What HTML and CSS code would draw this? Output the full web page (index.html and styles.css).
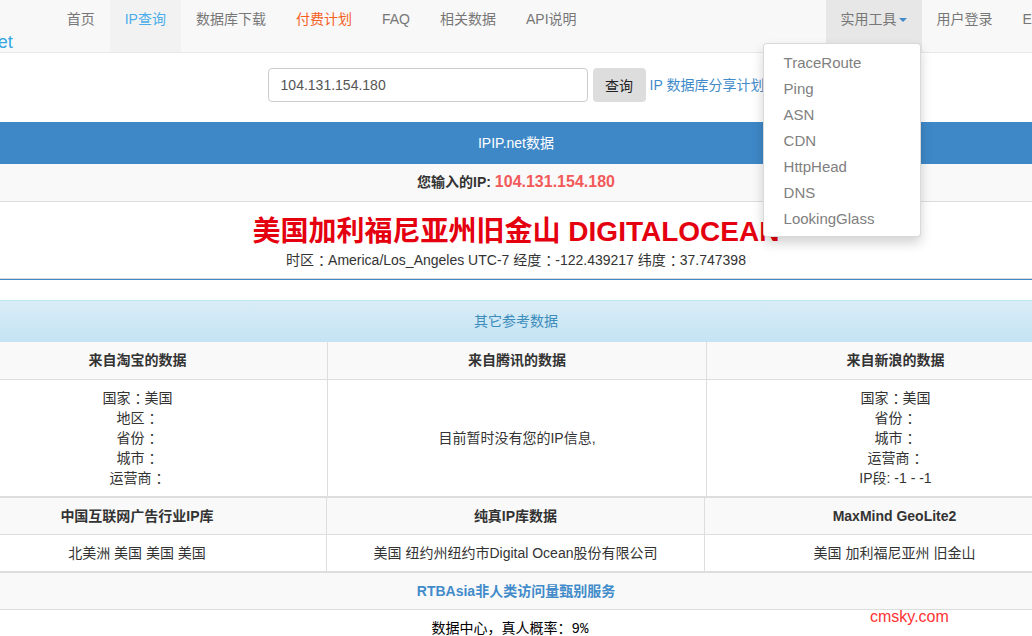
FILE: index.html
```html
<!DOCTYPE html>
<html lang="zh-CN">
<head>
    <meta charset="UTF-8">
    <meta name="viewport" content="width=device-width, initial-scale=1.0">
    <title>IP查询 - IPIP.net</title>
    <link rel="stylesheet" href="styles.css">
</head>
<body>
    <div class="page">
        <nav class="navbar">
            <a class="brand" href="#">IPIP.net</a>
            <ul class="nav">
                <li><a href="#">首页</a></li>
                <li class="active"><a href="#">IP查询</a></li>
                <li><a href="#">数据库下载</a></li>
                <li class="hot"><a href="#">付费计划</a></li>
                <li><a href="#">FAQ</a></li>
                <li><a href="#">相关数据</a></li>
                <li><a href="#">API说明</a></li>
            </ul>
            <ul class="nav nav-right">
                <li class="open">
                    <a href="#">实用工具<span class="caret"></span></a>
                    <!-- tools menu, left open -->
                    <ul class="dropdown">
                        <li><a href="#">TraceRoute</a></li>
                        <li><a href="#">Ping</a></li>
                        <li><a href="#">ASN</a></li>
                        <li><a href="#">CDN</a></li>
                        <li><a href="#">HttpHead</a></li>
                        <li><a href="#">DNS</a></li>
                        <li><a href="#">LookingGlass</a></li>
                    </ul>
                </li>
                <li><a href="#">用户登录</a></li>
                <li><a href="#">English</a></li>
            </ul>
        </nav>

        <form class="search">
            <input class="search-input" type="text" value="104.131.154.180">
            <button class="search-btn" type="button">查询</button>
            <a class="search-link" href="#">IP 数据库分享计划</a>
        </form>

        <div class="panel">
            <div class="panel-heading">IPIP.net数据</div>
            <div class="ip-row">您输入的IP: <span class="ip">104.131.154.180</span></div>
            <div class="result">
                <div class="result-title">美国加利福尼亚州旧金山 DIGITALOCEAN</div>
                <div class="result-meta">时区<span class="c">：</span>America/Los_Angeles UTC-7 经度<span class="c">：</span>-122.439217 纬度<span class="c">：</span>37.747398</div>
            </div>
        </div>

        <div class="info">
            <div class="info-heading">其它参考数据</div>
            <div class="grid grid-a">
                <div class="th">来自淘宝的数据</div>
                <div class="th">来自腾讯的数据</div>
                <div class="th">来自新浪的数据</div>
                <div class="td end">国家<span class="c">：</span>美国<br>地区<span class="c">：</span><br>省份<span class="c">：</span><br>城市<span class="c">：</span><br>运营商<span class="c">：</span></div>
                <div class="td end middle">目前暂时没有您的IP信息,</div>
                <div class="td end">国家<span class="c">：</span>美国<br>省份<span class="c">：</span><br>城市<span class="c">：</span><br>运营商<span class="c">：</span><br>IP段: -1 - -1</div>
            </div>
            <div class="grid grid-b">
                <div class="th">中国互联网广告行业IP库</div>
                <div class="th">纯真IP库数据</div>
                <div class="th">MaxMind GeoLite2</div>
                <div class="td end">北美洲 美国 美国 美国</div>
                <div class="td end">美国 纽约州纽约市Digital Ocean股份有限公司</div>
                <div class="td end">美国 加利福尼亚州 旧金山</div>
            </div>
            <div class="rtb">RTBAsia非人类访问量甄别服务</div>
            <div class="rtb-result">数据中心，真人概率：<span class="mono">9%</span></div>
        </div>
    </div>
    <div class="watermark">cmsky.com</div>
</body>
</html>
```

FILE: styles.css
```css
html, body {
    margin: 0;
    padding: 0;
}
body {
    font-family: "Liberation Sans", "Noto Sans CJK SC", sans-serif;
    font-size: 14px;
    line-height: 20px;
    color: #333;
    background: #fff;
    overflow: hidden;
}
a {
    text-decoration: none;
}
ul {
    list-style: none;
    margin: 0;
    padding: 0;
}
.page {
    width: 1136px;
    margin-left: -52px;
}
/* full-width colon drawn in the middle of its box */
.c {
    padding-left: 4px;
    letter-spacing: -4px;
}

/* navbar */
.navbar {
    display: flex;
    height: 52px;
    background: #f8f8f8;
    border-bottom: 1px solid #e7e7e7;
    white-space: nowrap;
}
.brand {
    margin-left: 3px;
    padding-top: 32px;
    font-size: 18px;
    color: #35a6e2;
}
.nav {
    display: flex;
    margin-left: 39px;
}
.nav > li {
    position: relative;
}
.nav > li > a {
    display: block;
    height: 52px;
    box-sizing: border-box;
    padding: 9px 15px 0;
    color: #777;
}
.nav > li.active > a {
    background: #f2f2f2;
    color: #4badea;
}
.nav > li.hot > a {
    color: #f5601e;
}
.nav-right {
    margin-left: 234px;
}
.nav > li.open > a {
    background: #e7e7e7;
}
.caret {
    display: inline-block;
    width: 0;
    height: 0;
    margin-left: 2px;
    vertical-align: middle;
    border-top: 4px solid #428bca;
    border-left: 4px solid transparent;
    border-right: 4px solid transparent;
}
.dropdown {
    position: absolute;
    top: 43px;
    right: 1px;
    z-index: 10;
    width: 158px;
    box-sizing: border-box;
    padding: 6px 0 4px;
    background: #fff;
    border: 1px solid rgba(0, 0, 0, .15);
    border-radius: 4px;
    box-shadow: 0 6px 12px rgba(0, 0, 0, .175);
}
.dropdown a {
    display: block;
    padding: 3px 20px;
    font-size: 15px;
    color: #808080;
}

/* search */
.search {
    display: flex;
    justify-content: center;
    align-items: center;
    margin: 15px 0 0;
}
.search-input {
    width: 320px;
    height: 34px;
    box-sizing: border-box;
    padding: 6px 12px;
    border: 1px solid #ccc;
    border-radius: 4px;
    font: 14px "Liberation Sans", sans-serif;
    color: #555;
}
.search-btn {
    width: 53px;
    height: 34px;
    margin-left: 5px;
    border: none;
    border-radius: 4px;
    background: #ddd;
    font: 14px "Noto Sans CJK SC", sans-serif;
    color: #222;
}
.search-link {
    margin-left: 4px;
    color: #428bca;
}

/* main result */
.panel {
    margin-top: 20px;
    border-bottom: 1px solid #3e88c7;
}
.panel-heading {
    padding: 11px 0;
    background: #3e88c7;
    color: #fff;
    text-align: center;
}
.ip-row {
    padding: 8px 0 9px;
    background: #f9f9f9;
    border-bottom: 1px solid #ddd;
    text-align: center;
    font-weight: bold;
}
.ip {
    font-size: 16px;
    color: #f25a5a;
}
.result {
    padding: 12px 0 8px;
    border-bottom: 1px solid #ddd;
    text-align: center;
}
.result-title {
    font-size: 28px;
    line-height: 36px;
    font-weight: bold;
    color: #e5000f;
}

/* reference data */
.info {
    margin-top: 20px;
}
.info-heading {
    padding: 10px 0 11px;
    border-top: 1px solid #bce8f1;
    background: linear-gradient(#d9edf7, #c4e3f3);
    color: #3c8dbc;
    text-align: center;
}
.grid {
    display: grid;
    text-align: center;
}
.grid-a {
    grid-template-columns: 379px 379px 1fr;
}
.grid-b {
    grid-template-columns: 378px 378px 1fr;
}
.th, .td {
    padding: 8px;
    border-bottom: 1px solid #ddd;
}
.th {
    background: #f9f9f9;
    font-weight: bold;
}
.grid-a .th {
    padding-bottom: 9px;
}
.th:nth-child(3n+2), .th:nth-child(3n),
.td:nth-child(3n+2), .td:nth-child(3n) {
    border-left: 1px solid #ddd;
}
.td.end {
    border-bottom-width: 2px;
}
.td.middle {
    display: flex;
    align-items: center;
    justify-content: center;
}
.rtb {
    padding: 8px 0;
    background: #f9f9f9;
    border-bottom: 1px solid #ddd;
    text-align: center;
    font-weight: bold;
    color: #428bca;
}
.rtb-result {
    padding: 8px 12px 8px 0;
    text-align: center;
    color: #000;
}
.mono {
    font-family: "Liberation Mono", monospace;
}
.watermark {
    position: absolute;
    left: 870px;
    top: 607px;
    font-size: 16px;
    color: #f33;
}
```
